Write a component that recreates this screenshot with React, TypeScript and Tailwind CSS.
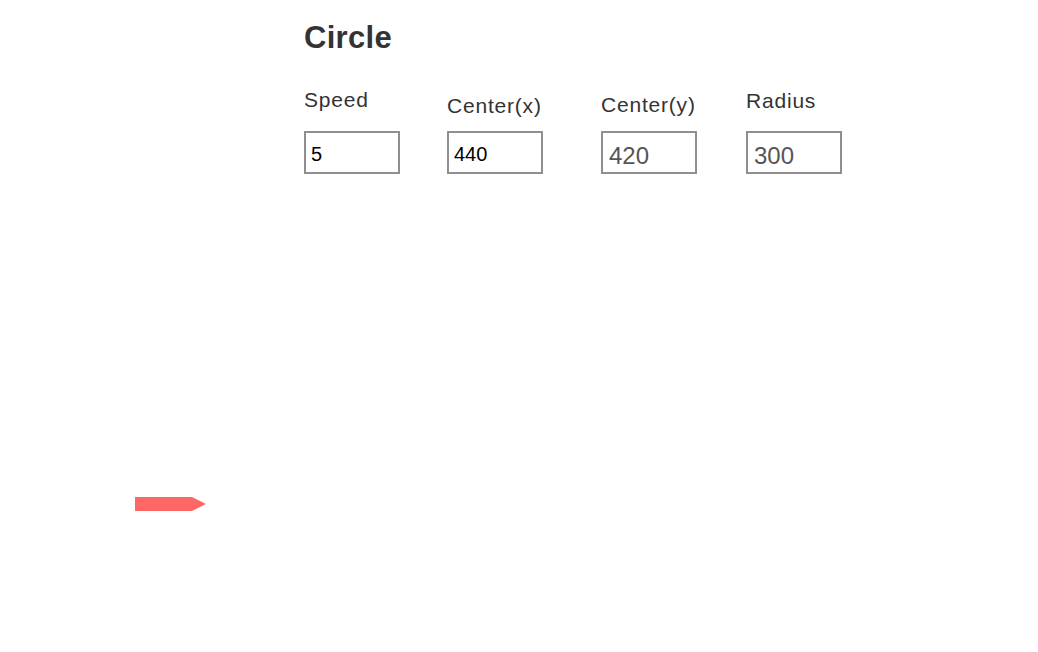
export default function App() {
  const fields = [
    { label: "Speed", value: "5", col: "w-[143px]", labelPad: "pt-0", dim: false },
    { label: "Center(x)", value: "440", col: "w-[154px]", labelPad: "pt-[6px]", dim: false },
    { label: "Center(y)", value: "420", col: "w-[145px]", labelPad: "pt-[5px]", dim: true },
    { label: "Radius", value: "300", col: "w-[96px]", labelPad: "pt-[1px]", dim: true },
  ];

  return (
    <div className="relative h-[652px] w-[1038px] bg-white font-['Liberation_Sans',Arial,sans-serif] text-[#333]">
      <div className="pl-[304px] pt-[22px]">
        <h1 className="text-[31px] font-bold leading-none tracking-[0.3px]">Circle</h1>
        <div className="mt-[37px] flex">
          {fields.map((f) => (
            <div key={f.label} className={`flex flex-col ${f.col}`}>
              <div className={`h-[41px] ${f.labelPad}`}>
                <span className="text-[21px] leading-[20px] tracking-[0.8px]">{f.label}</span>
              </div>
              {f.dim ? (
                <input
                  defaultValue={f.value}
                  className="box-border h-[43px] w-[96px] border-2 border-[#8f8f8f] bg-white px-[6px] pt-[11px] pb-[4px] text-[24px] leading-[24px] text-[#555] outline-none"
                />
              ) : (
                <input
                  defaultValue={f.value}
                  className="box-border h-[43px] w-[96px] border-2 border-[#8f8f8f] bg-white px-[5px] pt-[11px] pb-[8px] text-[20px] leading-[20px] text-black outline-none"
                />
              )}
            </div>
          ))}
        </div>
      </div>

      <svg className="absolute left-[135px] top-[497px]" width="72" height="14" viewBox="0 0 72 14">
        <polygon points="0,0 57,0 71,7 57,14 0,14" fill="#ff6666" />
      </svg>
    </div>
  );
}
